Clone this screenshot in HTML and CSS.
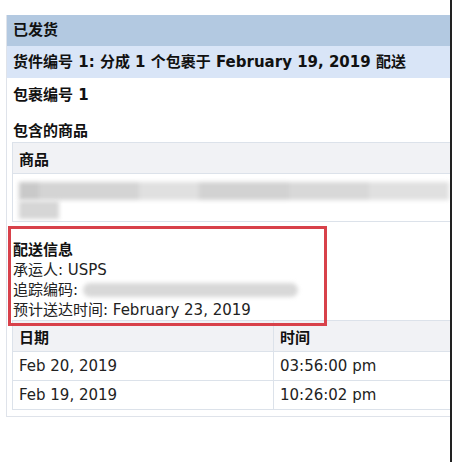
FILE: index.html
```html
<!DOCTYPE html>
<html lang="zh">
<head>
    <meta charset="UTF-8">
    <meta name="viewport" content="width=device-width, initial-scale=1.0">
    <title>已发货</title>
    <link rel="stylesheet" href="styles.css">
</head>
<body>
    <div class="page">
        <div class="panel">
            <div class="bar-title">已发货</div>
            <div class="bar-sub">货件编号 1: 分成 1 个包裹于 February 19, 2019 配送</div>
            <div class="pkg-title">包裹编号 1</div>
            <div class="items-title">包含的商品</div>
            <table class="grid items">
                <tr class="head"><th>商品</th></tr>
                <tr class="blur-row">
                    <td>
                        <div class="smudge">
                            <span class="s1"></span><span class="s2"></span><span class="s3"></span><span class="s4"></span><span class="s5"></span><span class="s6"></span>
                        </div>
                        <div class="smudge-small"></div>
                    </td>
                </tr>
            </table>
            <div class="ship">
                <div class="ship-title">配送信息</div>
                <div>承运人: USPS</div>
                <div>追踪编码: <span class="track"></span></div>
                <div>预计送达时间: February 23, 2019</div>
            </div>
            <table class="grid track-table">
                <tr class="head"><th class="col-date">日期</th><th>时间</th></tr>
                <tr><td>Feb 20, 2019</td><td>03:56:00 pm</td></tr>
                <tr><td>Feb 19, 2019</td><td>10:26:02 pm</td></tr>
            </table>
        </div>
        <!-- annotation -->
        <div class="mark"></div>
    </div>
</body>
</html>
```

FILE: styles.css
```css
body {
    margin: 0;
    background-color: #fff;
    color: #1a1a1a;
    font-family: "DejaVu Sans", "Noto Sans CJK SC", sans-serif;
    font-size: 15px;
}
.page {
    position: relative;
    width: 450px;
    height: 462px;
    border-right: 2px solid #222;
    overflow: hidden;
}
.panel {
    width: 460px;
    margin: 15px 0 0 6px;
    border: 1px solid #dfe3ea;
    border-top: none;
    border-right: none;
    padding-bottom: 6px;
}
.bar-title, .bar-sub {
    padding-left: 6px;
    font-weight: bold;
    color: #111;
}
.bar-title {
    height: 31px;
    line-height: 31px;
    background-color: #b3c9e1;
}
.bar-sub {
    height: 32px;
    line-height: 32px;
    background-color: #d9e5f7;
}
.pkg-title, .items-title, .ship-title {
    font-weight: bold;
    color: #111;
}
.pkg-title {
    margin-top: 7px;
    padding-left: 6px;
    line-height: 20px;
}
.items-title {
    margin-top: 16px;
    padding-left: 6px;
    line-height: 20px;
}
.grid {
    width: 455px;
    margin-left: 5px;
    border-collapse: collapse;
    border: 1px solid #dce2ea;
    border-right: none;
}
.grid th, .grid td {
    text-align: left;
    padding: 0 0 0 6px;
    border: 1px solid #dce2ea;
    border-right: none;
}
.grid .head th {
    height: 30px;
    background-color: #f1f2f5;
    font-weight: bold;
    color: #111;
}
.items {
    margin-top: 1px;
}
.blur-row td {
    height: 47px;
    vertical-align: top;
}
.smudge {
    display: flex;
    margin-top: 8px;
    height: 18px;
    filter: blur(2px);
}
.smudge span {
    height: 18px;
}
.s1 { width: 20px; background-color: #c9c9c9; }
.s2 { width: 100px; background-color: #d4d4d4; }
.s3 { width: 60px; background-color: #e0e0e0; }
.s4 { width: 90px; background-color: #d2d2d2; }
.s5 { width: 80px; background-color: #d8d8d8; }
.s6 { width: 80px; background-color: #e0e0e0; }
.smudge-small {
    width: 40px;
    height: 18px;
    margin-top: 1px;
    background-color: #d6d6d6;
    filter: blur(2px);
}
.ship {
    margin-top: 18px;
    padding-left: 6px;
    line-height: 20px;
    color: #222;
}
.track {
    display: inline-block;
    width: 215px;
    height: 14px;
    vertical-align: -2px;
    border-radius: 7px;
    background-color: #d8d8d8;
    filter: blur(2px);
}
.track-table td {
    height: 28px;
    color: #222;
}
.track-table .head th {
    height: 30px;
}
.col-date {
    width: 254px;
}
.mark {
    position: absolute;
    left: 8px;
    top: 226px;
    width: 313px;
    height: 94px;
    border: 3px solid #d8414a;
}
```
